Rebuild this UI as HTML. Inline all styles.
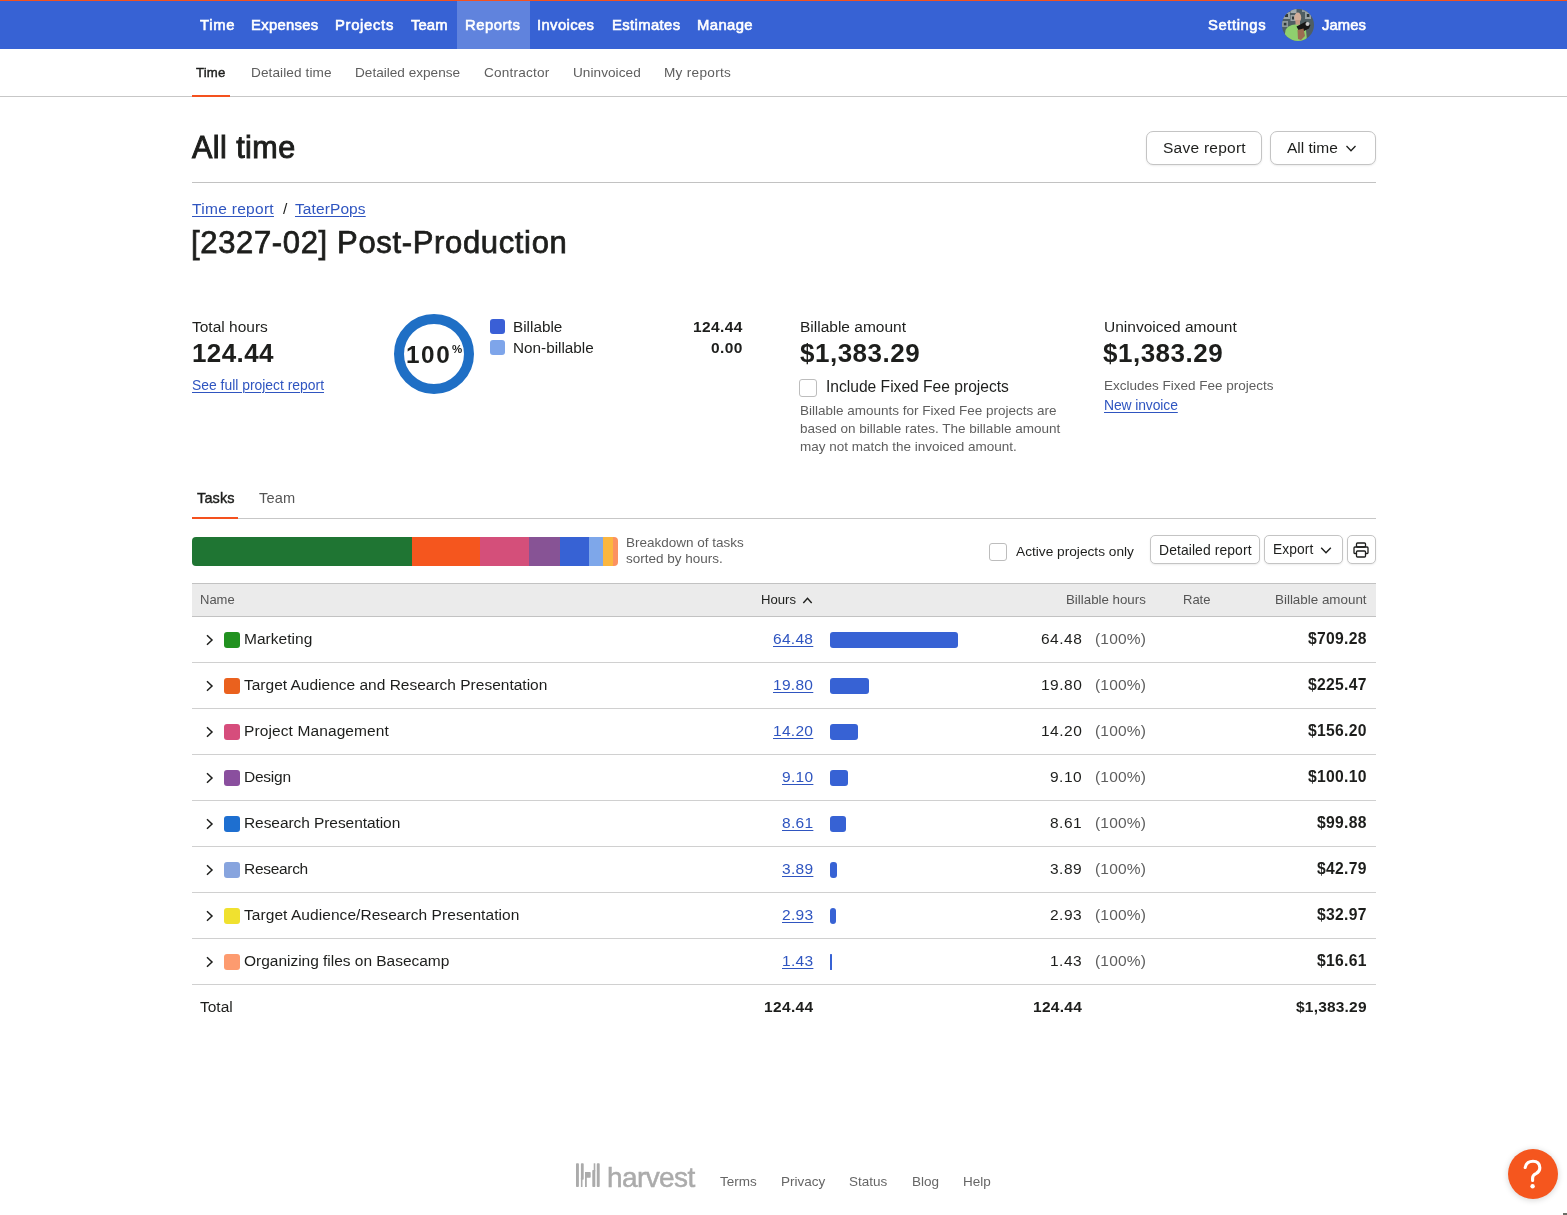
<!DOCTYPE html>
<html><head><meta charset="utf-8"><title>Time report</title>
<style>
html,body{margin:0;padding:0;background:#fff;}
body{width:1567px;height:1215px;overflow:hidden;position:relative;font-family:"Liberation Sans", sans-serif;color:#1d1e1c;}
.t{position:absolute;white-space:nowrap;will-change:transform;}
.r{position:absolute;}
a{color:inherit;}
.btn{position:absolute;border:1px solid #c4c4c4;border-radius:7px;background:#fff;box-shadow:0 1px 2px rgba(0,0,0,0.08);}
.u{text-decoration:underline;text-underline-offset:2px;text-decoration-thickness:1px;}
</style></head><body>
<div class="r" style="left:0px;top:0px;width:1567px;height:1px;background:#f4511e;"></div>
<div class="r" style="left:0px;top:1px;width:1567px;height:48px;background:#3762d4;"></div>
<div class="r" style="left:457px;top:1px;width:73px;height:48px;background:#6083dd;"></div>
<div class="t" style="top:14.87px;font-size:14.8px;line-height:21px;color:#fff;letter-spacing:0.68px;left:199.5px;-webkit-text-stroke:0.6px #fff;">Time</div>
<div class="t" style="top:14.87px;font-size:14.8px;line-height:21px;color:#fff;letter-spacing:0.31px;left:250.7px;-webkit-text-stroke:0.6px #fff;">Expenses</div>
<div class="t" style="top:14.87px;font-size:14.8px;line-height:21px;color:#fff;letter-spacing:0.69px;left:335.1px;-webkit-text-stroke:0.6px #fff;">Projects</div>
<div class="t" style="top:14.87px;font-size:14.8px;line-height:21px;color:#fff;letter-spacing:0.12px;left:410.9px;-webkit-text-stroke:0.6px #fff;">Team</div>
<div class="t" style="top:14.87px;font-size:14.8px;line-height:21px;color:#fff;letter-spacing:0.51px;left:465.3px;-webkit-text-stroke:0.6px #fff;">Reports</div>
<div class="t" style="top:14.87px;font-size:14.8px;line-height:21px;color:#fff;letter-spacing:0.39px;left:537.3px;-webkit-text-stroke:0.6px #fff;">Invoices</div>
<div class="t" style="top:14.87px;font-size:14.8px;line-height:21px;color:#fff;letter-spacing:0.39px;left:611.5px;-webkit-text-stroke:0.6px #fff;">Estimates</div>
<div class="t" style="top:14.87px;font-size:14.8px;line-height:21px;color:#fff;letter-spacing:0.41px;left:696.7px;-webkit-text-stroke:0.6px #fff;">Manage</div>
<div class="t" style="top:14.87px;font-size:14.8px;line-height:21px;color:#fff;letter-spacing:0.58px;left:1207.8px;-webkit-text-stroke:0.6px #fff;">Settings</div>
<div class="t" style="top:14.87px;font-size:14.8px;line-height:21px;color:#fff;letter-spacing:0.11px;left:1322.3px;-webkit-text-stroke:0.6px #fff;">James</div>
<svg class="r" style="left:1282px;top:9px" width="32" height="32" viewBox="0 0 32 32">
<defs><clipPath id="av"><circle cx="16" cy="16" r="16"/></clipPath></defs>
<g clip-path="url(#av)">
<rect width="32" height="32" fill="#4f5e62"/>
<rect x="1" y="3" width="7" height="7" fill="#9aa4a6"/><rect x="3" y="5" width="3" height="3" fill="#2e3739"/>
<rect x="0" y="12" width="6" height="6" fill="#8f999b"/><rect x="1.8" y="13.8" width="2.6" height="2.6" fill="#2e3739"/>
<rect x="8.5" y="0" width="6" height="4" fill="#a3acae"/>
<rect x="8.5" y="6" width="4.5" height="6" fill="#98a2a4"/><rect x="10" y="7.5" width="2" height="3" fill="#2e3739"/>
<rect x="23" y="3" width="6" height="7" fill="#98a2a4"/><rect x="24.8" y="5" width="2.6" height="3" fill="#2e3739"/>
<rect x="20" y="0" width="5" height="3" fill="#8f999b"/>
<ellipse cx="15.8" cy="8.5" rx="3.4" ry="5" fill="#d2ad98"/>
<rect x="13.5" y="11" width="4.5" height="5" fill="#c49a84"/>
<path d="M2 32 L3.5 21 Q6 16 13 15.5 L19 16 L24 21 L25 32 Z" fill="#8fd06e"/>
<path d="M14.5 17.5 L24 12.5 L28.5 16 L27 19.5 L18 24 Z" fill="#161616"/>
<circle cx="25.5" cy="15" r="2" fill="#c8c8c8"/>
<path d="M15.5 21 L21.5 19.5 L23 27 L19 31 L16 30 Z" fill="#9c6c52"/>
</g></svg>
<div class="r" style="left:0px;top:96px;width:1567px;height:1px;background:#c7c7c7;"></div>
<div class="r" style="left:192px;top:95px;width:38px;height:2px;background:#f4511e;"></div>
<div class="t" style="top:63.63px;font-size:13.2px;line-height:18px;color:#1d1e1c;letter-spacing:0.18px;left:195.8px;-webkit-text-stroke:0.4px #1d1e1c;">Time</div>
<div class="t" style="top:62.79px;font-size:13.6px;line-height:19px;color:#5e5e5e;letter-spacing:0.1px;left:250.5px;">Detailed time</div>
<div class="t" style="top:62.79px;font-size:13.6px;line-height:19px;color:#5e5e5e;left:354.5px;">Detailed expense</div>
<div class="t" style="top:62.79px;font-size:13.6px;line-height:19px;color:#5e5e5e;letter-spacing:0.2px;left:483.5px;">Contractor</div>
<div class="t" style="top:62.79px;font-size:13.6px;line-height:19px;color:#5e5e5e;letter-spacing:0.05px;left:573px;">Uninvoiced</div>
<div class="t" style="top:62.79px;font-size:13.6px;line-height:19px;color:#5e5e5e;letter-spacing:0.3px;left:664px;">My reports</div>
<div class="t" style="top:126.23px;font-size:30.5px;line-height:43px;color:#1d1e1c;letter-spacing:0.45px;left:192px;-webkit-text-stroke:0.95px #1d1e1c;">All time</div>
<div class="btn" style="left:1146px;top:131px;width:114px;height:32px;"></div>
<div class="t" style="top:137.13px;font-size:15.5px;line-height:22px;color:#1d1e1c;letter-spacing:0.25px;left:1162.5px;">Save report</div>
<div class="btn" style="left:1270px;top:131px;width:104px;height:32px;"></div>
<div class="t" style="top:136.93px;font-size:15.5px;line-height:22px;color:#1d1e1c;left:1287px;">All time</div>
<svg class="r" style="left:1345px;top:144px" width="12" height="9" viewBox="0 0 12 9"><path d="M1.5 2 L6 6.8 L10.5 2" fill="none" stroke="#1d1e1c" stroke-width="1.3"/></svg>
<div class="r" style="left:192px;top:182px;width:1184px;height:1px;background:#c2c2c2;"></div>
<div class="t" style="top:198.13px;font-size:15.5px;line-height:22px;color:#2f55c0;letter-spacing:0.3px;left:192px;"><span class="u">Time report</span></div>
<div class="t" style="top:197.63px;font-size:15.5px;line-height:22px;color:#1d1e1c;left:282.5px;">/</div>
<div class="t" style="top:197.63px;font-size:15.5px;line-height:22px;color:#2f55c0;letter-spacing:0.1px;left:295px;"><span class="u">TaterPops</span></div>
<div class="t" style="top:221.16px;font-size:31px;line-height:43px;color:#1d1e1c;letter-spacing:0.65px;left:191px;-webkit-text-stroke:0.75px #1d1e1c;">[2327-02] Post-Production</div>
<div class="t" style="top:315.63px;font-size:15.5px;line-height:22px;color:#1d1e1c;left:192px;">Total hours</div>
<div class="t" style="top:335.49px;font-size:26px;line-height:36px;font-weight:700;color:#1d1e1c;letter-spacing:0.4px;left:192px;">124.44</div>
<div class="t" style="top:375.68px;font-size:13.9px;line-height:19px;color:#2f55c0;left:192px;"><span class="u">See full project report</span></div>
<svg class="r" style="left:393px;top:313px" width="82" height="82" viewBox="0 0 82 82"><circle cx="41" cy="41" r="35" fill="none" stroke="#1f6fc5" stroke-width="10"/></svg>
<div class="t" style="top:337.98px;font-size:24.3px;line-height:34px;font-weight:700;color:#1d1e1c;letter-spacing:1.6px;left:406px;">100</div>
<div class="t" style="top:340.82px;font-size:11.5px;line-height:16px;font-weight:700;color:#1d1e1c;letter-spacing:-0.3px;left:451.5px;">%</div>
<div class="r" style="left:490px;top:319px;width:15px;height:15px;background:#3a5fd6;border-radius:3px;"></div>
<div class="r" style="left:490px;top:340px;width:15px;height:15px;background:#7ea5ea;border-radius:3px;"></div>
<div class="t" style="top:316.20px;font-size:15.3px;line-height:21px;color:#1d1e1c;left:513px;">Billable</div>
<div class="t" style="top:337.20px;font-size:15.3px;line-height:21px;color:#1d1e1c;left:513px;">Non-billable</div>
<div class="t" style="top:315.63px;font-size:15.5px;line-height:22px;font-weight:700;color:#1d1e1c;letter-spacing:0.4px;right:824px;text-align:right;">124.44</div>
<div class="t" style="top:336.63px;font-size:15.5px;line-height:22px;font-weight:700;color:#1d1e1c;letter-spacing:0.4px;right:824px;text-align:right;">0.00</div>
<div class="t" style="top:315.63px;font-size:15.5px;line-height:22px;color:#1d1e1c;left:800px;">Billable amount</div>
<div class="t" style="top:334.99px;font-size:26px;line-height:36px;font-weight:700;color:#1d1e1c;letter-spacing:0.5px;left:799.5px;">$1,383.29</div>
<div class="r" style="left:799px;top:379px;width:16px;height:16px;border:1px solid #bdbdbd;border-radius:3px;background:#fff;"></div>
<div class="t" style="top:375.59px;font-size:15.6px;line-height:22px;color:#1d1e1c;left:825.5px;">Include Fixed Fee projects</div>
<div class="t" style="top:400.82px;font-size:13.5px;line-height:19px;color:#5e5e5e;left:800px;">Billable amounts for Fixed Fee projects are</div>
<div class="t" style="top:418.82px;font-size:13.5px;line-height:19px;color:#5e5e5e;left:800px;">based on billable rates. The billable amount</div>
<div class="t" style="top:436.82px;font-size:13.5px;line-height:19px;color:#5e5e5e;left:800px;">may not match the invoiced amount.</div>
<div class="t" style="top:315.63px;font-size:15.5px;line-height:22px;color:#1d1e1c;left:1103.5px;">Uninvoiced amount</div>
<div class="t" style="top:334.99px;font-size:26px;line-height:36px;font-weight:700;color:#1d1e1c;letter-spacing:0.5px;left:1103px;">$1,383.29</div>
<div class="t" style="top:375.82px;font-size:13.5px;line-height:19px;color:#5e5e5e;left:1103.5px;">Excludes Fixed Fee projects</div>
<div class="t" style="top:395.68px;font-size:13.9px;line-height:19px;color:#2f55c0;letter-spacing:-0.1px;left:1103.5px;"><span class="u">New invoice</span></div>
<div class="t" style="top:487.98px;font-size:14.5px;line-height:20px;color:#1d1e1c;letter-spacing:0.14px;left:196.6px;-webkit-text-stroke:0.4px #1d1e1c;">Tasks</div>
<div class="t" style="top:487.94px;font-size:14.6px;line-height:20px;color:#555;letter-spacing:0.15px;left:258.5px;">Team</div>
<div class="r" style="left:192px;top:518px;width:1184px;height:1px;background:#c7c7c7;"></div>
<div class="r" style="left:192px;top:517px;width:46px;height:2px;background:#f4511e;"></div>
<div class="r" style="left:192px;top:537px;width:426px;height:29px;border-radius:4px;overflow:hidden;"><div style="position:absolute;left:0px;top:0;width:220px;height:29px;background:#1f7533;"></div><div style="position:absolute;left:220px;top:0;width:68px;height:29px;background:#f5561e;"></div><div style="position:absolute;left:288px;top:0;width:49px;height:29px;background:#d44f7a;"></div><div style="position:absolute;left:337px;top:0;width:31px;height:29px;background:#875395;"></div><div style="position:absolute;left:368px;top:0;width:29px;height:29px;background:#3762d4;"></div><div style="position:absolute;left:397px;top:0;width:14px;height:29px;background:#7ea7ea;"></div><div style="position:absolute;left:411px;top:0;width:10px;height:29px;background:#fbb63f;"></div><div style="position:absolute;left:421px;top:0;width:5px;height:29px;background:#fc9160;"></div></div>
<div class="t" style="top:532.82px;font-size:13.5px;line-height:19px;color:#5e5e5e;left:626px;">Breakdown of tasks</div>
<div class="t" style="top:548.82px;font-size:13.5px;line-height:19px;color:#5e5e5e;left:626px;">sorted by hours.</div>
<div class="r" style="left:989px;top:543px;width:16px;height:16px;border:1px solid #bdbdbd;border-radius:3px;background:#fff;"></div>
<div class="t" style="top:541.75px;font-size:13.7px;line-height:19px;color:#1d1e1c;left:1015.5px;">Active projects only</div>
<div class="btn" style="left:1150px;top:535px;width:108px;height:27px;border-radius:5px;"></div>
<div class="t" style="top:541.18px;font-size:13.9px;line-height:19px;color:#1d1e1c;letter-spacing:0.1px;left:1158.5px;">Detailed report</div>
<div class="btn" style="left:1264px;top:535px;width:77px;height:27px;border-radius:5px;"></div>
<div class="t" style="top:540.02px;font-size:13.8px;line-height:19px;color:#1d1e1c;letter-spacing:0.1px;left:1272.5px;">Export</div>
<svg class="r" style="left:1320px;top:546px" width="12" height="9" viewBox="0 0 12 9"><path d="M1.2 1.8 L6 6.8 L10.8 1.8" fill="none" stroke="#1d1e1c" stroke-width="1.4"/></svg>
<div class="btn" style="left:1347px;top:535px;width:27px;height:27px;border-radius:5px;"></div>
<svg class="r" style="left:1353px;top:542px" width="16" height="16" viewBox="0 0 16 16"><g fill="none" stroke="#1d1e1c" stroke-width="1.3" stroke-linejoin="round"><rect x="3.5" y="1" width="9" height="4" rx="1"/><path d="M3 11.5 H1.8 Q1 11.5 1 10.7 V6 Q1 5 2 5 H14 Q15 5 15 6 V10.7 Q15 11.5 14.2 11.5 H13"/><rect x="3.5" y="9" width="9" height="6" rx="1"/></g></svg>
<div class="r" style="left:192px;top:583px;width:1184px;height:1px;background:#c2c2c2;"></div>
<div class="r" style="left:192px;top:584px;width:1184px;height:32px;background:#ebebeb;"></div>
<div class="r" style="left:192px;top:616px;width:1184px;height:1px;background:#c2c2c2;"></div>
<div class="t" style="top:591.10px;font-size:13px;line-height:18px;color:#555;left:199.5px;">Name</div>
<div class="t" style="top:591.26px;font-size:13.1px;line-height:18px;color:#1d1e1c;left:760.5px;">Hours</div>
<svg class="r" style="left:802px;top:596px" width="11" height="9" viewBox="0 0 11 9"><path d="M1.3 7 L5.5 2.4 L9.7 7" fill="none" stroke="#1d1e1c" stroke-width="1.4"/></svg>
<div class="t" style="top:590.49px;font-size:13.3px;line-height:19px;color:#555;right:421px;text-align:right;">Billable hours</div>
<div class="t" style="top:591.10px;font-size:13px;line-height:18px;color:#555;left:1182.5px;">Rate</div>
<div class="t" style="top:590.46px;font-size:13.4px;line-height:19px;color:#555;right:200px;text-align:right;">Billable amount</div>
<svg class="r" style="left:205px;top:634px" width="10" height="12" viewBox="0 0 10 12"><path d="M2 1.2 L7 6 L2 10.8" fill="none" stroke="#1d1e1c" stroke-width="1.5"/></svg>
<div class="r" style="left:224px;top:632px;width:16px;height:16px;background:#21911f;border-radius:3px;"></div>
<div class="t" style="top:627.63px;font-size:15.5px;line-height:22px;color:#1d1e1c;letter-spacing:0.04px;left:243.5px;">Marketing</div>
<div class="t" style="top:627.63px;font-size:15.5px;line-height:22px;color:#2f55c0;letter-spacing:0.3px;right:753.5px;text-align:right;"><span class="u">64.48</span></div>
<div class="r" style="left:830px;top:632px;width:128px;height:16px;background:#3762d4;border-radius:3px;"></div>
<div class="t" style="top:627.63px;font-size:15.5px;line-height:22px;color:#1d1e1c;letter-spacing:0.5px;right:484.5px;text-align:right;">64.48</div>
<div class="t" style="top:627.63px;font-size:15.5px;line-height:22px;color:#5e5e5e;letter-spacing:0.2px;right:420.5px;text-align:right;">(100%)</div>
<div class="t" style="top:627.56px;font-size:15.7px;line-height:22px;font-weight:700;color:#1d1e1c;letter-spacing:0.3px;right:200px;text-align:right;">$709.28</div>
<div class="r" style="left:192px;top:662px;width:1184px;height:1px;background:#d0d0d0;"></div>
<svg class="r" style="left:205px;top:680px" width="10" height="12" viewBox="0 0 10 12"><path d="M2 1.2 L7 6 L2 10.8" fill="none" stroke="#1d1e1c" stroke-width="1.5"/></svg>
<div class="r" style="left:224px;top:678px;width:16px;height:16px;background:#ea611e;border-radius:3px;"></div>
<div class="t" style="top:673.63px;font-size:15.5px;line-height:22px;color:#1d1e1c;left:243.5px;">Target Audience and Research Presentation</div>
<div class="t" style="top:673.63px;font-size:15.5px;line-height:22px;color:#2f55c0;letter-spacing:0.3px;right:753.5px;text-align:right;"><span class="u">19.80</span></div>
<div class="r" style="left:830px;top:678px;width:39px;height:16px;background:#3762d4;border-radius:3px;"></div>
<div class="t" style="top:673.63px;font-size:15.5px;line-height:22px;color:#1d1e1c;letter-spacing:0.5px;right:484.5px;text-align:right;">19.80</div>
<div class="t" style="top:673.63px;font-size:15.5px;line-height:22px;color:#5e5e5e;letter-spacing:0.2px;right:420.5px;text-align:right;">(100%)</div>
<div class="t" style="top:673.56px;font-size:15.7px;line-height:22px;font-weight:700;color:#1d1e1c;letter-spacing:0.3px;right:200px;text-align:right;">$225.47</div>
<div class="r" style="left:192px;top:708px;width:1184px;height:1px;background:#d0d0d0;"></div>
<svg class="r" style="left:205px;top:726px" width="10" height="12" viewBox="0 0 10 12"><path d="M2 1.2 L7 6 L2 10.8" fill="none" stroke="#1d1e1c" stroke-width="1.5"/></svg>
<div class="r" style="left:224px;top:724px;width:16px;height:16px;background:#d64d7c;border-radius:3px;"></div>
<div class="t" style="top:719.63px;font-size:15.5px;line-height:22px;color:#1d1e1c;letter-spacing:0.11px;left:243.5px;">Project Management</div>
<div class="t" style="top:719.63px;font-size:15.5px;line-height:22px;color:#2f55c0;letter-spacing:0.3px;right:753.5px;text-align:right;"><span class="u">14.20</span></div>
<div class="r" style="left:830px;top:724px;width:28px;height:16px;background:#3762d4;border-radius:3px;"></div>
<div class="t" style="top:719.63px;font-size:15.5px;line-height:22px;color:#1d1e1c;letter-spacing:0.5px;right:484.5px;text-align:right;">14.20</div>
<div class="t" style="top:719.63px;font-size:15.5px;line-height:22px;color:#5e5e5e;letter-spacing:0.2px;right:420.5px;text-align:right;">(100%)</div>
<div class="t" style="top:719.56px;font-size:15.7px;line-height:22px;font-weight:700;color:#1d1e1c;letter-spacing:0.3px;right:200px;text-align:right;">$156.20</div>
<div class="r" style="left:192px;top:754px;width:1184px;height:1px;background:#d0d0d0;"></div>
<svg class="r" style="left:205px;top:772px" width="10" height="12" viewBox="0 0 10 12"><path d="M2 1.2 L7 6 L2 10.8" fill="none" stroke="#1d1e1c" stroke-width="1.5"/></svg>
<div class="r" style="left:224px;top:770px;width:16px;height:16px;background:#8a4f9e;border-radius:3px;"></div>
<div class="t" style="top:765.63px;font-size:15.5px;line-height:22px;color:#1d1e1c;letter-spacing:-0.25px;left:243.5px;">Design</div>
<div class="t" style="top:765.63px;font-size:15.5px;line-height:22px;color:#2f55c0;letter-spacing:0.3px;right:753.5px;text-align:right;"><span class="u">9.10</span></div>
<div class="r" style="left:830px;top:770px;width:18px;height:16px;background:#3762d4;border-radius:3px;"></div>
<div class="t" style="top:765.63px;font-size:15.5px;line-height:22px;color:#1d1e1c;letter-spacing:0.5px;right:484.5px;text-align:right;">9.10</div>
<div class="t" style="top:765.63px;font-size:15.5px;line-height:22px;color:#5e5e5e;letter-spacing:0.2px;right:420.5px;text-align:right;">(100%)</div>
<div class="t" style="top:765.56px;font-size:15.7px;line-height:22px;font-weight:700;color:#1d1e1c;letter-spacing:0.3px;right:200px;text-align:right;">$100.10</div>
<div class="r" style="left:192px;top:800px;width:1184px;height:1px;background:#d0d0d0;"></div>
<svg class="r" style="left:205px;top:818px" width="10" height="12" viewBox="0 0 10 12"><path d="M2 1.2 L7 6 L2 10.8" fill="none" stroke="#1d1e1c" stroke-width="1.5"/></svg>
<div class="r" style="left:224px;top:816px;width:16px;height:16px;background:#1e6fd0;border-radius:3px;"></div>
<div class="t" style="top:811.63px;font-size:15.5px;line-height:22px;color:#1d1e1c;letter-spacing:-0.07px;left:243.5px;">Research Presentation</div>
<div class="t" style="top:811.63px;font-size:15.5px;line-height:22px;color:#2f55c0;letter-spacing:0.3px;right:753.5px;text-align:right;"><span class="u">8.61</span></div>
<div class="r" style="left:830px;top:816px;width:16px;height:16px;background:#3762d4;border-radius:3px;"></div>
<div class="t" style="top:811.63px;font-size:15.5px;line-height:22px;color:#1d1e1c;letter-spacing:0.5px;right:484.5px;text-align:right;">8.61</div>
<div class="t" style="top:811.63px;font-size:15.5px;line-height:22px;color:#5e5e5e;letter-spacing:0.2px;right:420.5px;text-align:right;">(100%)</div>
<div class="t" style="top:811.56px;font-size:15.7px;line-height:22px;font-weight:700;color:#1d1e1c;letter-spacing:0.3px;right:200px;text-align:right;">$99.88</div>
<div class="r" style="left:192px;top:846px;width:1184px;height:1px;background:#d0d0d0;"></div>
<svg class="r" style="left:205px;top:864px" width="10" height="12" viewBox="0 0 10 12"><path d="M2 1.2 L7 6 L2 10.8" fill="none" stroke="#1d1e1c" stroke-width="1.5"/></svg>
<div class="r" style="left:224px;top:862px;width:16px;height:16px;background:#87a4de;border-radius:3px;"></div>
<div class="t" style="top:857.63px;font-size:15.5px;line-height:22px;color:#1d1e1c;letter-spacing:-0.3px;left:243.5px;">Research</div>
<div class="t" style="top:857.63px;font-size:15.5px;line-height:22px;color:#2f55c0;letter-spacing:0.3px;right:753.5px;text-align:right;"><span class="u">3.89</span></div>
<div class="r" style="left:830px;top:862px;width:7px;height:16px;background:#3762d4;border-radius:3px;"></div>
<div class="t" style="top:857.63px;font-size:15.5px;line-height:22px;color:#1d1e1c;letter-spacing:0.5px;right:484.5px;text-align:right;">3.89</div>
<div class="t" style="top:857.63px;font-size:15.5px;line-height:22px;color:#5e5e5e;letter-spacing:0.2px;right:420.5px;text-align:right;">(100%)</div>
<div class="t" style="top:857.56px;font-size:15.7px;line-height:22px;font-weight:700;color:#1d1e1c;letter-spacing:0.3px;right:200px;text-align:right;">$42.79</div>
<div class="r" style="left:192px;top:892px;width:1184px;height:1px;background:#d0d0d0;"></div>
<svg class="r" style="left:205px;top:910px" width="10" height="12" viewBox="0 0 10 12"><path d="M2 1.2 L7 6 L2 10.8" fill="none" stroke="#1d1e1c" stroke-width="1.5"/></svg>
<div class="r" style="left:224px;top:908px;width:16px;height:16px;background:#f0e12f;border-radius:3px;"></div>
<div class="t" style="top:903.63px;font-size:15.5px;line-height:22px;color:#1d1e1c;letter-spacing:0.06px;left:243.5px;">Target Audience/Research Presentation</div>
<div class="t" style="top:903.63px;font-size:15.5px;line-height:22px;color:#2f55c0;letter-spacing:0.3px;right:753.5px;text-align:right;"><span class="u">2.93</span></div>
<div class="r" style="left:830px;top:908px;width:6px;height:16px;background:#3762d4;border-radius:3px;"></div>
<div class="t" style="top:903.63px;font-size:15.5px;line-height:22px;color:#1d1e1c;letter-spacing:0.5px;right:484.5px;text-align:right;">2.93</div>
<div class="t" style="top:903.63px;font-size:15.5px;line-height:22px;color:#5e5e5e;letter-spacing:0.2px;right:420.5px;text-align:right;">(100%)</div>
<div class="t" style="top:903.56px;font-size:15.7px;line-height:22px;font-weight:700;color:#1d1e1c;letter-spacing:0.3px;right:200px;text-align:right;">$32.97</div>
<div class="r" style="left:192px;top:938px;width:1184px;height:1px;background:#d0d0d0;"></div>
<svg class="r" style="left:205px;top:956px" width="10" height="12" viewBox="0 0 10 12"><path d="M2 1.2 L7 6 L2 10.8" fill="none" stroke="#1d1e1c" stroke-width="1.5"/></svg>
<div class="r" style="left:224px;top:954px;width:16px;height:16px;background:#fd9b6f;border-radius:3px;"></div>
<div class="t" style="top:949.63px;font-size:15.5px;line-height:22px;color:#1d1e1c;letter-spacing:-0.02px;left:243.5px;">Organizing files on Basecamp</div>
<div class="t" style="top:949.63px;font-size:15.5px;line-height:22px;color:#2f55c0;letter-spacing:0.3px;right:753.5px;text-align:right;"><span class="u">1.43</span></div>
<div class="r" style="left:830px;top:954px;width:2px;height:16px;background:#3762d4;border-radius:0.5px;"></div>
<div class="t" style="top:949.63px;font-size:15.5px;line-height:22px;color:#1d1e1c;letter-spacing:0.5px;right:484.5px;text-align:right;">1.43</div>
<div class="t" style="top:949.63px;font-size:15.5px;line-height:22px;color:#5e5e5e;letter-spacing:0.2px;right:420.5px;text-align:right;">(100%)</div>
<div class="t" style="top:949.56px;font-size:15.7px;line-height:22px;font-weight:700;color:#1d1e1c;letter-spacing:0.3px;right:200px;text-align:right;">$16.61</div>
<div class="r" style="left:192px;top:984px;width:1184px;height:1px;background:#d0d0d0;"></div>
<div class="t" style="top:996.43px;font-size:15.5px;line-height:22px;color:#1d1e1c;left:200px;">Total</div>
<div class="t" style="top:996.43px;font-size:15.5px;line-height:22px;font-weight:700;color:#1d1e1c;letter-spacing:0.35px;right:753.5px;text-align:right;">124.44</div>
<div class="t" style="top:996.43px;font-size:15.5px;line-height:22px;font-weight:700;color:#1d1e1c;letter-spacing:0.3px;right:484.5px;text-align:right;">124.44</div>
<div class="t" style="top:996.43px;font-size:15.5px;line-height:22px;font-weight:700;color:#1d1e1c;letter-spacing:0.2px;right:200px;text-align:right;">$1,383.29</div>
<svg class="r" style="left:576px;top:1163px" width="24" height="24" viewBox="0 0 24 24" fill="#ababab"><rect x="0" y="0.3" width="2.9" height="23.7" rx="0.8"/><rect x="4.9" y="0.3" width="2.8" height="16.5" rx="0.8"/><rect x="4.9" y="15" width="1.6" height="9"/><rect x="9" y="9" width="5.7" height="5.7" rx="0.8"/><rect x="9" y="9" width="1.8" height="15"/><rect x="16.3" y="7" width="3" height="17" rx="0.8"/><rect x="17.7" y="0.3" width="1.6" height="8"/><rect x="20.8" y="0.3" width="2.9" height="23.7" rx="0.8"/></svg>
<div class="t" style="top:1158.10px;font-size:28px;line-height:39px;color:#ababab;letter-spacing:-0.6px;left:606.5px;-webkit-text-stroke:0.5px #ababab;">harvest</div>
<div class="t" style="top:1171.82px;font-size:13.5px;line-height:19px;color:#666;left:720px;">Terms</div>
<div class="t" style="top:1171.82px;font-size:13.5px;line-height:19px;color:#666;left:780.5px;">Privacy</div>
<div class="t" style="top:1171.82px;font-size:13.5px;line-height:19px;color:#666;left:849px;">Status</div>
<div class="t" style="top:1171.82px;font-size:13.5px;line-height:19px;color:#666;left:911.5px;">Blog</div>
<div class="t" style="top:1171.82px;font-size:13.5px;line-height:19px;color:#666;left:963px;">Help</div>
<div class="r" style="left:1508px;top:1149px;width:50px;height:50px;border-radius:50%;background:#f5561e;box-shadow:0 1px 6px rgba(0,0,0,0.18);"></div>
<svg class="r" style="left:1508px;top:1149px" width="50" height="50" viewBox="0 0 50 50"><path d="M17.2 18.5 Q18.5 12.3 25 12.3 Q31.5 12.3 31.8 18.6 Q32 22.6 28 24.6 Q24.6 26.2 24.6 29 V31.5" fill="none" stroke="#fff" stroke-width="3.1" stroke-linecap="round"/><circle cx="24.6" cy="37.3" r="2.2" fill="#fff"/></svg>
<div class="r" style="left:1563px;top:1213px;width:4px;height:2px;background:#6b6e66;"></div>
</body></html>
